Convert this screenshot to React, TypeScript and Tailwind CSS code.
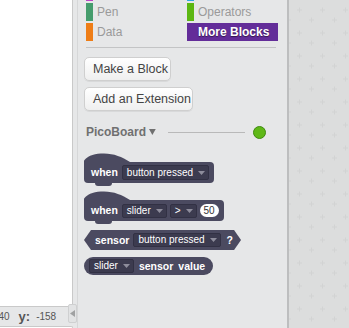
import React from "react";

const Tri = () => (
  <svg width="7" height="4" viewBox="0 0 7 4" className="shrink-0">
    <path d="M0 0 L7 0 L3.5 4 Z" fill="#8e8d9c" />
  </svg>
);

const Drop = ({ label, h = "h-[15px]" }: { label: string; h?: string }) => (
  <div
    className={`flex items-center ${h} bg-[#3c3b4f] border border-[#323144] rounded-[2px] pl-[4px] pr-[3px] gap-[5px] text-[10px] text-white leading-none whitespace-nowrap`}
  >
    <span>{label}</span>
    <Tri />
  </div>
);

const Bump = () => (
  <svg width="46" height="9" viewBox="0 0 46 9" className="block">
    <path d="M0 9 L0 7.5 C 5 2, 11 0.5, 20 0.5 C 30 0.5, 38 4, 46 9 Z" fill="#4b4a60" />
  </svg>
);

const Notch = () => <div className="ml-[11px] w-[17px] h-[3px] bg-[#4b4a60] rounded-b-[3px]" />;

export default function App() {
  return (
    <div className="relative w-[349px] h-[328px] overflow-hidden flex bg-[#e6e7e8] font-['Liberation_Sans',Arial,sans-serif]">
      {/* Stage column */}
      <div className="w-[73px] shrink-0 flex flex-col">
        <div className="h-[307px] bg-white border-r border-b border-[#c9c9c9]" />
        <div className="h-[19px] flex items-center whitespace-nowrap text-[#555] -ml-[27px]">
          <span className="text-[13px] font-bold">x:</span>
          <span className="text-[10px] ml-[5px]">-240</span>
          <span className="text-[13px] font-bold ml-[9px]">y:</span>
          <span className="text-[10px] ml-[6px]">-158</span>
        </div>
        <div className="flex-1 bg-white border-t border-r border-[#c9c9c9] rounded-tr-[4px]" />
      </div>

      {/* small strip */}
      <div className="w-[4px] shrink-0" />

      {/* Palette */}
      <div className="w-[210px] shrink-0 border-l border-[#d6d7d8] flex flex-col">
        <div className="-mt-[17px] pl-[8px] grid grid-cols-[101px_91px] gap-y-[2px] text-[12px] text-[#9a9a9a] whitespace-nowrap">
          <div className="flex items-center h-[18px]">
            <div className="w-[7px] h-full bg-[#bb42c3]" />
          </div>
          <div className="flex items-center h-[18px]">
            <div className="w-[7px] h-full bg-[#2ca5e2]" />
          </div>
          <div className="flex items-center h-[18px]">
            <div className="w-[7px] h-full bg-[#459c6c]" />
            <span className="ml-[4px]">Pen</span>
          </div>
          <div className="flex items-center h-[18px]">
            <div className="w-[7px] h-full bg-[#5cb712]" />
            <span className="ml-[4px]">Operators</span>
          </div>
          <div className="flex items-center h-[18px]">
            <div className="w-[7px] h-full bg-[#ee7d16]" />
            <span className="ml-[4px]">Data</span>
          </div>
          <div className="flex items-center h-[18px] bg-[#632d99]">
            <div className="w-[7px] h-full bg-[#632d99]" />
            <span className="ml-[4px] text-white font-bold [text-shadow:0_1px_1px_rgba(0,0,0,0.5)]">More Blocks</span>
          </div>
        </div>

        <div className="mt-[6px] ml-[8px] w-[190px] h-px bg-[#c3c4c5]" />

        <div className="mt-[9px] ml-[6px] flex flex-col items-start gap-[6px]">
          <div className="h-[24px] w-[87px] flex items-center pl-[8px] whitespace-nowrap rounded-[5px] border border-[#cfcfcf] bg-gradient-to-b from-[#ffffff] to-[#efefef] text-[12.5px] text-[#444] shadow-[0_1px_0_rgba(0,0,0,0.06)]">
            Make a Block
          </div>
          <div className="h-[24px] w-[109px] flex items-center pl-[8px] whitespace-nowrap rounded-[5px] border border-[#cfcfcf] bg-gradient-to-b from-[#ffffff] to-[#efefef] text-[12.5px] text-[#444] shadow-[0_1px_0_rgba(0,0,0,0.06)]">
            Add an Extension
          </div>
        </div>

        {/* PicoBoard header */}
        <div className="mt-[13px] h-[16px] pl-[8px] pr-[21px] flex items-center">
          <span className="text-[12px] font-bold text-[#707070]">PicoBoard</span>
          <svg width="7" height="6" viewBox="0 0 7 6" className="ml-[3px]">
            <path d="M0 0 L7 0 L3.5 6 Z" fill="#707070" />
          </svg>
          <div className="ml-[12px] w-[81px] h-px bg-[#b9b9b9]" />
          <div className="ml-[8px] w-[13px] h-[13px] rounded-full bg-[#5fb817] border border-[#3f8a0f]" />
        </div>

        {/* Blocks */}
        <div className="mt-[13px] ml-[6px] flex flex-col items-start text-white">
          {/* hat 1 */}
          <div className="flex flex-col items-start">
            <Bump />
            <div className="h-[21px] flex items-center pl-[7px] pr-[5px] gap-[4px] bg-[#4b4a60] rounded-tr-[4px] rounded-b-[4px]">
              <span className="text-[10.5px] font-bold leading-none">when</span>
              <Drop label="button pressed" />
            </div>
            <Notch />
          </div>

          {/* hat 2 */}
          <div className="mt-[5px] flex flex-col items-start">
            <Bump />
            <div className="h-[21px] flex items-center pl-[7px] pr-[5px] gap-[3px] bg-[#4b4a60] rounded-tr-[4px] rounded-b-[4px]">
              <span className="text-[10.5px] font-bold leading-none mr-[1px]">when</span>
              <Drop label="slider" h="h-[14px]" />
              <Drop label=">" h="h-[14px]" />
              <div className="h-[13px] w-[19px] rounded-full bg-white flex items-center justify-center text-[10px] text-[#333] leading-none">
                50
              </div>
            </div>
            <Notch />
          </div>

          {/* boolean */}
          <div className="mt-[6px] h-[20px] flex items-center pl-[11px] pr-[8px] gap-[4px] bg-[#4b4a60] [clip-path:polygon(7px_0,calc(100%-7px)_0,100%_50%,calc(100%-7px)_100%,7px_100%,0_50%)]">
            <span className="text-[10.5px] font-bold leading-none">sensor</span>
            <Drop label="button pressed" h="h-[14px]" />
            <span className="text-[10.5px] font-bold leading-none ml-[2px]">?</span>
          </div>

          {/* reporter */}
          <div className="mt-[7px] h-[18px] flex items-center pl-[5px] pr-[8px] gap-[5px] bg-[#4b4a60] rounded-full">
            <Drop label="slider" h="h-[14px]" />
            <span className="text-[10.5px] font-bold leading-none">sensor</span>
            <span className="text-[10.5px] font-bold leading-none">value</span>
          </div>
        </div>
      </div>

      {/* Script area */}
      <div className="flex-1 border-l-2 border-[#bdbebf] bg-[#dcdddd]">
        <svg width="60" height="328" className="block">
          <defs>
            <pattern id="grid" width="23" height="23" patternUnits="userSpaceOnUse">
              <path d="M8 10 H13 M10.5 7.5 V12.5" stroke="#d2d3d3" strokeWidth="1" />
              <path d="M20 20 H25 M22.5 17.5 V22.5" stroke="#d2d3d3" strokeWidth="1" />
              <path d="M-3 20 H2 M-0.5 17.5 V22.5" stroke="#d2d3d3" strokeWidth="1" />
            </pattern>
          </defs>
          <rect width="60" height="328" fill="url(#grid)" />
        </svg>
      </div>

      {/* stage collapse toggle */}
      <div className="absolute left-[68px] top-[304px] w-[9px] h-[19px] rounded-[2px] bg-[#e2e3e4] border border-[#cfd0d1] flex items-center justify-center">
        <svg width="5" height="7" viewBox="0 0 5 7">
          <path d="M5 0 L5 7 L0 3.5 Z" fill="#a0a1a2" />
        </svg>
      </div>
    </div>
  );
}
